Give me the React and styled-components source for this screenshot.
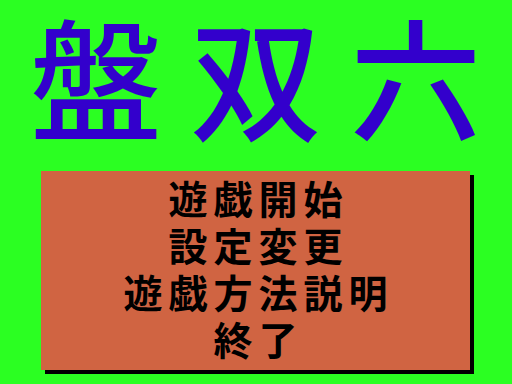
import React from "react";
import styled, { createGlobalStyle } from "styled-components";

const Global = createGlobalStyle`
  html, body { margin: 0; padding: 0; }
  body { background: #2bff22; font-family: "Noto Sans CJK JP", "Noto Sans", sans-serif; }
`;

const Screen = styled.div`
  width: 512px;
  height: 384px;
  background: #2bff22;
  display: flex;
  flex-direction: column;
  align-items: flex-start;
  overflow: hidden;
`;

const Title = styled.h1`
  margin: 0;
  width: 512px;
  height: 171px;
  display: flex;
  justify-content: center;
  align-items: flex-start;
  font-family: "Noto Sans CJK JP", sans-serif;
  font-weight: 500;
  font-size: 132px;
  line-height: 147px;
  color: #3300cc;
`;

const TitleChar = styled.span`
  display: block;
  width: 160px;
  text-align: center;
`;

const Menu = styled.div`
  margin-left: 41px;
  width: 429px;
  height: 199px;
  padding-bottom: 6px;
  box-sizing: border-box;
  background: #d06442;
  box-shadow: 4px 4px 0 #000;
  display: flex;
  flex-direction: column;
  align-items: center;
  justify-content: center;
`;

const Item = styled.div`
  font-family: "Noto Sans CJK JP", sans-serif;
  font-weight: 700;
  font-size: 39px;
  line-height: 47px;
  letter-spacing: 6px;
  text-indent: 6px;
  color: #000;
`;

const items = ["遊戯開始", "設定変更", "遊戯方法説明", "終了"];

export default function App() {
  return (
    <>
      <Global />
      <Screen>
        <Title>
          {["盤", "双", "六"].map((c) => (
            <TitleChar key={c}>{c}</TitleChar>
          ))}
        </Title>
        <Menu>
          {items.map((t) => (
            <Item key={t}>{t}</Item>
          ))}
        </Menu>
      </Screen>
    </>
  );
}
